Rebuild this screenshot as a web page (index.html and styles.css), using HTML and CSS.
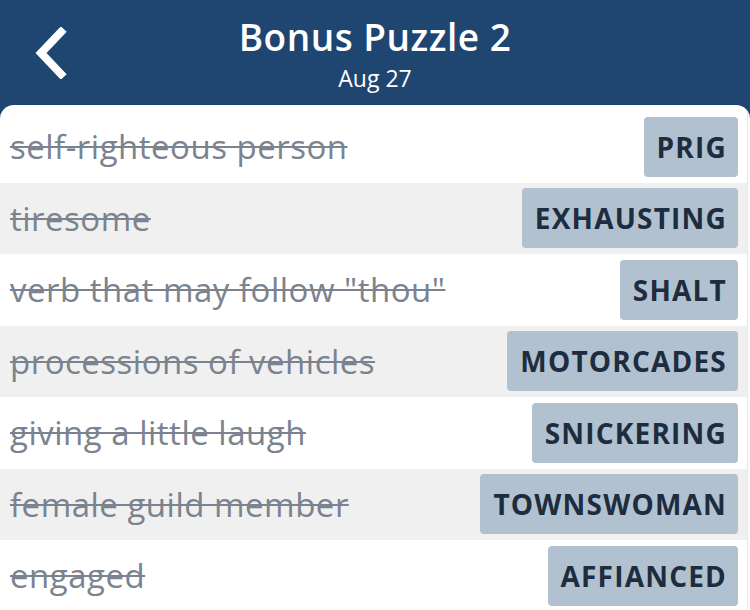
FILE: index.html
```html
<!DOCTYPE html>
<html lang="en">
<head>
    <meta charset="UTF-8">
    <title>Bonus Puzzle 2</title>
    <link rel="stylesheet" href="styles.css">
</head>
<body>

<div class="header">
    <a class="back-btn" href="#">
        <svg width="34" height="52" viewBox="0 0 34 52">
            <path d="M28 5 L8 26 L28 47" fill="none" stroke="#fff" stroke-width="8" stroke-linecap="square"/>
        </svg>
    </a>
    <div class="title-block">
        <h1>Bonus Puzzle 2</h1>
        <div class="date">Aug 27</div>
    </div>
</div>

<div class="clue-list">
    <div class="clue-row">
        <span class="clue">self-righteous person</span>
        <span class="answer">PRIG</span>
    </div>
    <div class="clue-row alt">
        <span class="clue">tiresome</span>
        <span class="answer">EXHAUSTING</span>
    </div>
    <div class="clue-row">
        <span class="clue">verb that may follow "thou"</span>
        <span class="answer">SHALT</span>
    </div>
    <div class="clue-row alt">
        <span class="clue">processions of vehicles</span>
        <span class="answer">MOTORCADES</span>
    </div>
    <div class="clue-row">
        <span class="clue">giving a little laugh</span>
        <span class="answer">SNICKERING</span>
    </div>
    <div class="clue-row alt">
        <span class="clue">female guild member</span>
        <span class="answer">TOWNSWOMAN</span>
    </div>
    <div class="clue-row">
        <span class="clue">engaged</span>
        <span class="answer">AFFIANCED</span>
    </div>
</div>

</body>
</html>
```

FILE: styles.css
```css
body {
    margin: 0;
    background-color: #1f4571;
    font-family: "Open Sans", sans-serif;
    height: 610px;
    overflow: hidden;
}

.header {
    height: 105px;
    display: flex;
    align-items: center;
    justify-content: center;
    position: relative;
    color: #fff;
}

.back-btn {
    position: absolute;
    left: 33px;
    top: 27px;
}

.title-block {
    text-align: center;
    margin-top: 2px;
}

h1 {
    margin: 0;
    font-size: 37px;
    font-weight: 600;
    line-height: 44px;
    letter-spacing: 0.5px;
}

.date {
    font-size: 23px;
    line-height: 30px;
    margin-top: 4px;
}

.clue-list {
    background-color: #fff;
    border-radius: 14px 14px 0 0;
    padding-top: 6px;
    width: 750px;
}

.clue-row {
    height: 71.5px;
    display: flex;
    align-items: center;
    justify-content: space-between;
    padding: 0 9px 0 10px;
    margin-right: 2px;
    border-right: 1px solid #e8e8e8;
    box-sizing: border-box;
}

.clue-row.alt {
    background-color: #f0f0f0;
}

.clue {
    color: #7b838f;
    font-size: 33px;
    letter-spacing: 0.5px;
    text-decoration: line-through;
    text-decoration-thickness: 2px;
}

.answer {
    background-color: #b1c1cf;
    color: #1d2c3e;
    font-size: 28px;
    font-weight: 700;
    letter-spacing: 1.2px;
    height: 60px;
    line-height: 60px;
    padding: 0 11px 0 13px;
    border-radius: 4px;
}
```
